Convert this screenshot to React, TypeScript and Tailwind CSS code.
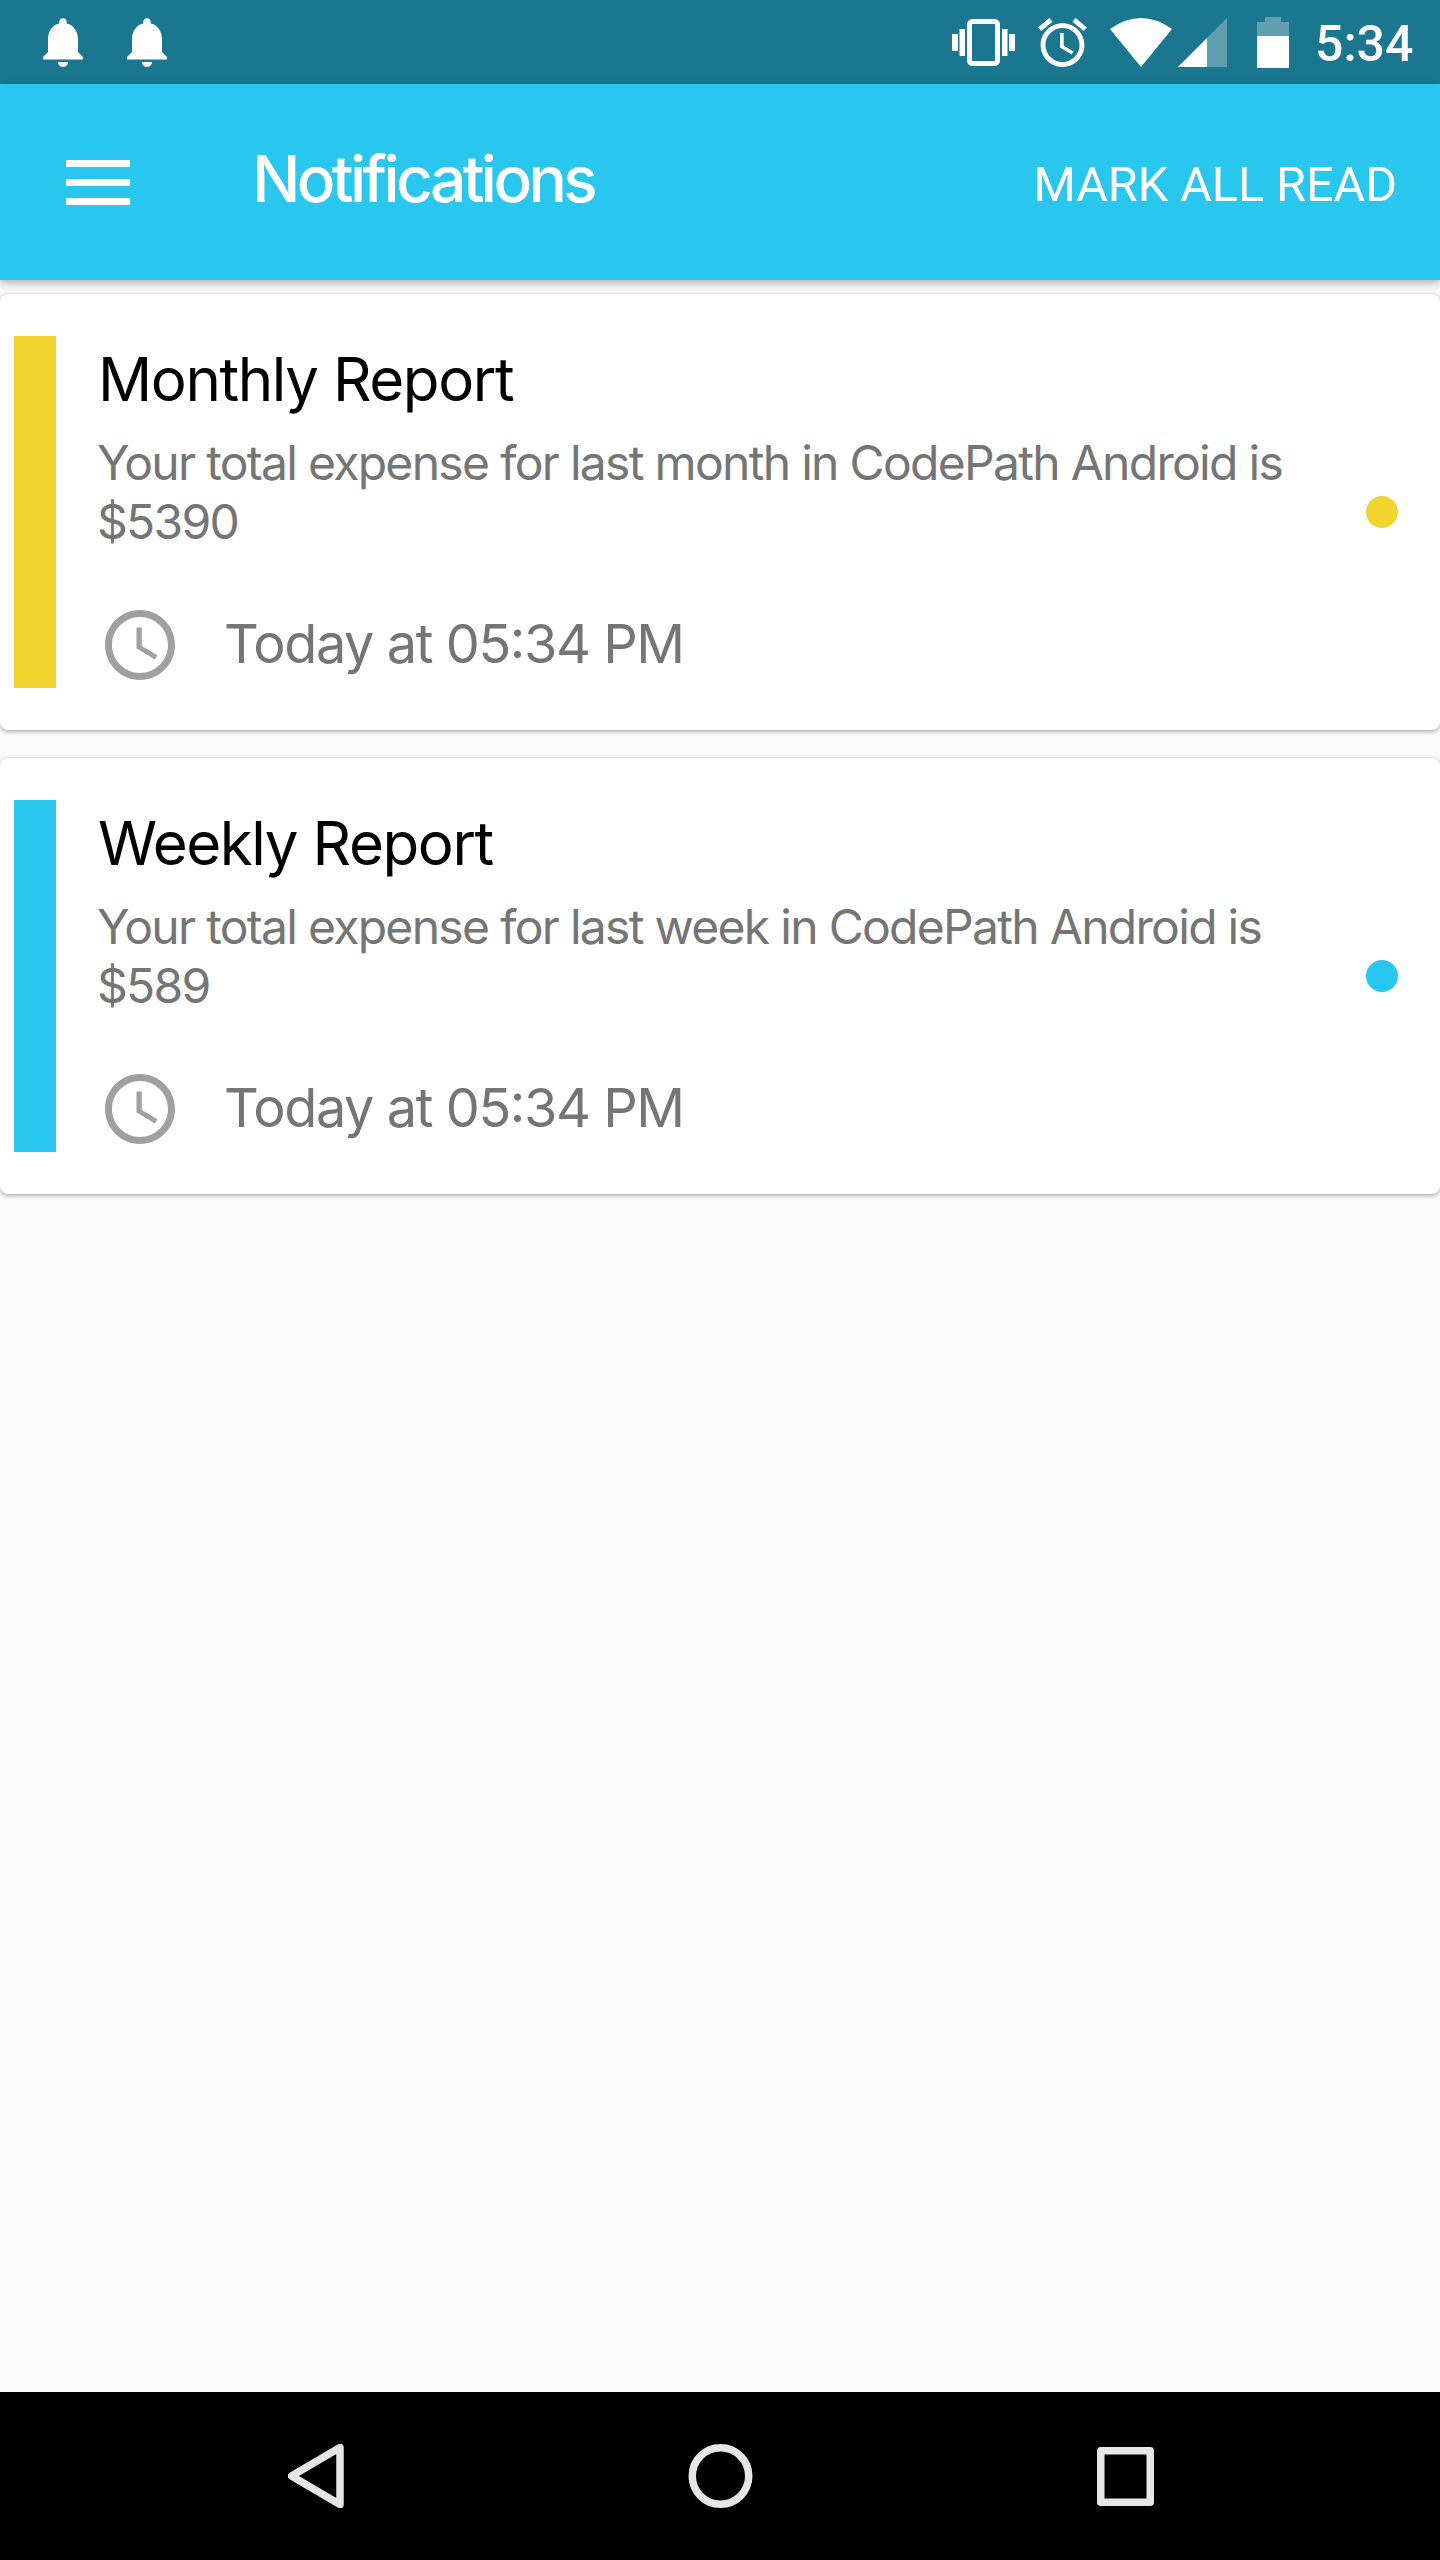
import React from 'react';

const roboto = { fontFamily: 'Roboto, sans-serif' };
const inter = { fontFamily: 'Inter, sans-serif' };

function Bell() {
  return (
    <svg viewBox="4 2.5 16 19.5" className="w-[40px] h-[49px]" fill="#ffffff">
      <path d="M12 22c1.1 0 2-.9 2-2h-4c0 1.1.89 2 2 2zm6-6v-5c0-3.07-1.64-5.64-4.5-6.32V4c0-.83-.67-1.5-1.5-1.5s-1.5.67-1.5 1.5v.68C7.63 5.36 6 7.92 6 11v5l-2 2v1h16v-1l-2-2z" />
    </svg>
  );
}

function StatusIcons() {
  return (
    <div className="flex items-center">
      {/* vibrate */}
      <svg viewBox="0 0 63 47" className="w-[63px] h-[47px]" fill="#ffffff">
        <rect x="0" y="15" width="6" height="17" />
        <rect x="7.5" y="10" width="5.5" height="27" />
        <rect x="50" y="10" width="5.5" height="27" />
        <rect x="57" y="15" width="6" height="17" />
        <rect x="17.5" y="2.5" width="28" height="42" rx="3" fill="none" stroke="#ffffff" strokeWidth="5" />
      </svg>
      {/* alarm */}
      <svg viewBox="2 1.86 20 20.14" className="ml-[23px] w-[49px] h-[49px]" fill="#ffffff">
        <path d="M22 5.72l-4.6-3.86-1.29 1.53 4.6 3.86L22 5.72zM7.88 3.39L6.6 1.86 2 5.71l1.29 1.53 4.59-3.85zM12.5 8H11v6l4.75 2.85.75-1.23-4-2.37V8zM12 4c-4.97 0-9 4.03-9 9s4.02 9 9 9c4.97 0 9-4.03 9-9s-4.03-9-9-9zm0 16c-3.87 0-7-3.13-7-7s3.13-7 7-7 7 3.13 7 7-3.13 7-7 7z" />
      </svg>
      {/* wifi */}
      <svg viewBox="0 0 62 49" className="ml-[23px] w-[62px] h-[49px]" fill="#ffffff">
        <path d="M31 49 L0 11 Q31 -11 62 11 Z" />
      </svg>
      {/* signal */}
      <svg viewBox="0 0 49 49" className="ml-[6px] w-[49px] h-[49px]" fill="#ffffff">
        <path d="M29 20 L49 0 V49 H29 Z" fillOpacity="0.3" />
        <path d="M0 49 L29 20 V49 Z" />
      </svg>
      {/* battery */}
      <svg viewBox="0 0 32 51" className="ml-[30px] w-[32px] h-[51px]" fill="#ffffff">
        <path d="M8 0 H24 V5 H32 V19 H0 V5 H8 Z" fillOpacity="0.3" />
        <rect x="0" y="19" width="32" height="32" />
      </svg>
      <span className="ml-[26px] mt-[3px] w-[96px] text-[50px] leading-[50px] font-medium text-white" style={roboto}>5:34</span>
    </div>
  );
}

function ClockIcon() {
  return (
    <svg viewBox="2 2 20 20" className="w-[70px] h-[70px]" fill="#a0a0a0">
      <path d="M11.99 2C6.47 2 2 6.48 2 12s4.47 10 9.99 10C17.52 22 22 17.52 22 12S17.52 2 11.99 2zM12 20c-4.42 0-8-3.58-8-8s3.58-8 8-8 8 3.58 8 8-3.58 8-8 8zm.5-13H11v6l5.25 3.15.75-1.23-4.5-2.67z" />
    </svg>
  );
}

function NotificationCard({ title, body, barClass, dotClass }: { title: string; body: React.ReactNode; barClass: string; dotClass: string }) {
  return (
    <div className="h-[436px] bg-white rounded-[8px] shadow-[0_2px_4px_rgba(0,0,0,0.25),0_0_3px_rgba(0,0,0,0.15)] flex items-center pl-[14px] pr-[42px]">
      <div className={`w-[42px] h-[352px] ${barClass}`} />
      <div className="flex-1 pl-[42px] h-[352px] flex flex-col" style={inter}>
        <div className="text-[60px] leading-[70px] text-black tracking-[-1.4px] mt-[8px]">{title}</div>
        <div className="-ml-[1px] text-[48px] leading-[59px] text-[#757575] tracking-[-1.7px] mt-[19px]">{body}</div>
        <div className="flex items-center mt-[59px]">
          <div className="ml-[7px] w-[70px]"><ClockIcon /></div>
          <span className="ml-[49px] -mt-[2px] text-[54px] leading-[70px] text-[#757575] tracking-[-1.4px] [font-feature-settings:'calt']">Today at 05:34 PM</span>
        </div>
      </div>
      <div className={`w-[32px] h-[32px] rounded-full ${dotClass}`} />
    </div>
  );
}

export default function App() {
  return (
    <div className="w-[1440px] h-[2560px] flex flex-col bg-[#fafafa] overflow-hidden">
      <div className="h-[84px] bg-[#1a778f] flex items-center justify-between pl-[43px] pr-[29px]">
        <div className="flex items-center gap-[44px]">
          <Bell />
          <Bell />
        </div>
        <StatusIcons />
      </div>
      <div className="relative h-[196px] bg-[#29c7ed] flex items-center pl-[66px] pr-[43px] shadow-[0_3px_8px_rgba(0,0,0,0.3)] text-white">
        <div className="w-[64px] flex flex-col gap-[12px]">
          <div className="h-[7px] bg-white" />
          <div className="h-[7px] bg-white" />
          <div className="h-[7px] bg-white" />
        </div>
        <div className="ml-[122px] -mt-[6px] text-[64px] leading-[72px] font-medium tracking-[-3.6px]" style={inter}>Notifications</div>
        <div className="ml-auto mt-[6px] text-[48.5px] leading-[60px]" style={roboto}>MARK ALL READ</div>
      </div>
      <div className="flex-1 flex flex-col gap-[28px] pt-[14px]">
        <NotificationCard
          title="Monthly Report"
          body={<>Your total expense for last month in CodePath Android is<br />$5390</>}
          barClass="bg-[#f2d42e]"
          dotClass="bg-[#f2d42e]"
        />
        <NotificationCard
          title="Weekly Report"
          body={<>Your total expense for last week in CodePath Android is<br />$589</>}
          barClass="bg-[#29c7ed]"
          dotClass="bg-[#29c7ed]"
        />
      </div>
      <div className="h-[168px] bg-black flex items-center relative">
        <div className="w-full flex items-center pl-[288px]">
          <svg viewBox="0 0 56 64" className="w-[56px] h-[64px]" fill="none" stroke="#e6e6e6" strokeWidth="7.5" strokeLinejoin="round">
            <path d="M52 3.5 V60.5 L3.5 32 Z" />
          </svg>
          <svg viewBox="0 0 65 64" className="ml-[344px] w-[65px] h-[64px]" fill="none" stroke="#e6e6e6" strokeWidth="7.5">
            <circle cx="32.5" cy="32" r="28.25" />
          </svg>
          <svg viewBox="0 0 57 59" className="ml-[344px] w-[57px] h-[59px]" fill="none" stroke="#e6e6e6" strokeWidth="7.5" strokeLinejoin="round">
            <rect x="3.75" y="3.75" width="49.5" height="51.5" />
          </svg>
        </div>
      </div>
    </div>
  );
}
